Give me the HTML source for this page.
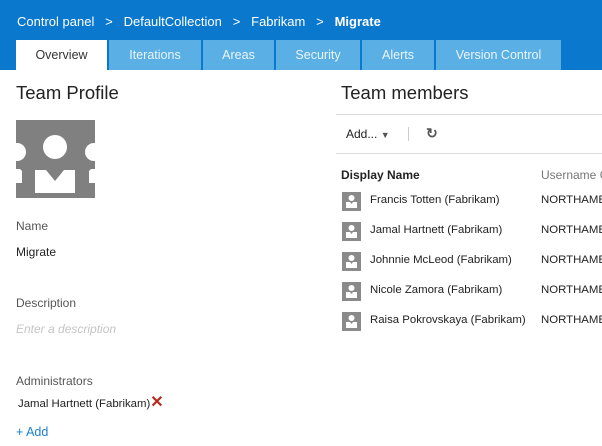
<!DOCTYPE html>
<html><head><style>
body{margin:0;width:602px;height:446px;overflow:hidden;background:#fff;font-family:"Liberation Sans",sans-serif;position:relative}
.a{position:absolute;white-space:nowrap}
.hdr{position:absolute;left:0;top:0;width:602px;height:70px;background:#0a78cd}
.tab{position:absolute;top:40px;height:30px;background:#5aafe5;color:#eaf5fc;font-size:12.5px;text-align:center;line-height:31px}
.lbl{color:#555;font-size:12px}
.txt{color:#222;font-size:12px}
.r{color:#222;font-size:11.4px}
.av{position:absolute;left:342px;width:19px;height:19px;background:#8a8a8a;overflow:hidden}
</style></head><body>
<div class="hdr"></div>
<div class="a" style="left:17px;top:14px;color:#fff;font-size:13px">Control panel &nbsp;&nbsp;&gt;&nbsp;&nbsp; DefaultCollection &nbsp;&nbsp;&gt;&nbsp;&nbsp; Fabrikam &nbsp;&nbsp;&gt;&nbsp;&nbsp; <b>Migrate</b></div>
<div class="tab" style="left:16px;width:91px;background:#fff;color:#333">Overview</div>
<div class="tab" style="left:109px;width:92px">Iterations</div>
<div class="tab" style="left:203px;width:71px">Areas</div>
<div class="tab" style="left:276px;width:84px">Security</div>
<div class="tab" style="left:362px;width:72px">Alerts</div>
<div class="tab" style="left:436px;width:125px">Version Control</div>

<div class="a" style="left:16px;top:82px;font-size:18.5px;color:#222">Team Profile</div>
<svg class="a" style="left:16px;top:120px" width="79" height="78" viewBox="0 0 79 78">
<rect width="79" height="78" fill="#808080"/>
<circle cx="39" cy="27" r="12" fill="#fff"/>
<circle cx="1" cy="32" r="9" fill="#fff"/>
<circle cx="78" cy="32" r="9" fill="#fff"/>
<path d="M19 50 H30 L39 61 L48 50 H59 V73 H19 Z" fill="#fff"/>
<path d="M0 49 H4 L6 51 V63 H0 Z M79 49 H75 L73 51 V63 H79Z" fill="#fff"/>
</svg>
<div class="a lbl" style="left:16px;top:219px">Name</div>
<div class="a txt" style="left:16px;top:245px">Migrate</div>
<div class="a lbl" style="left:16px;top:296px">Description</div>
<div class="a" style="left:16px;top:322px;font-size:12px;color:#c4c4c4;font-style:italic">Enter a description</div>
<div class="a lbl" style="left:16px;top:374px">Administrators</div>
<div class="a txt" style="left:18px;top:398px;font-size:11.4px">Jamal Hartnett (Fabrikam)<span style="color:#b52a1a;font-size:16px;font-weight:bold;line-height:10px">✕</span></div>
<div class="a" style="left:16px;top:425px;font-size:12.5px;color:#1a7fd0">+ Add</div>

<div class="a" style="left:341px;top:82px;font-size:18.5px;color:#222">Team members</div>
<div class="a" style="left:336px;top:114px;width:266px;height:1px;background:#ddd"></div>
<div class="a txt" style="left:346px;top:127px">Add... <span style="font-size:9px;color:#555">▼</span></div>
<div class="a" style="left:408px;top:127px;width:1px;height:14px;background:#ccc"></div>
<div class="a" style="left:426px;top:125px;font-size:14px;color:#555;font-weight:bold">↻</div>
<div class="a" style="left:336px;top:153px;width:266px;height:1px;background:#ddd"></div>
<div class="a" style="left:341px;top:168px;font-size:12px;font-weight:bold;color:#222">Display Name</div>
<div class="a lbl" style="left:541px;top:168px;color:#777">Username Or</div>

<div class="av" style="top:192px"><svg width="19" height="19"><circle cx="9.5" cy="6" r="3" fill="#fff"/><path d="M4 10H8L9.5 12L11 10H15V16H4Z" fill="#fff"/></svg></div><div class="a r" style="left:370px;top:194px">Francis Totten (Fabrikam)</div><div class="a r" style="left:541px;top:194px">NORTHAMERICA</div>
<div class="av" style="top:222px"><svg width="19" height="19"><circle cx="9.5" cy="6" r="3" fill="#fff"/><path d="M4 10H8L9.5 12L11 10H15V16H4Z" fill="#fff"/></svg></div><div class="a r" style="left:370px;top:224px">Jamal Hartnett (Fabrikam)</div><div class="a r" style="left:541px;top:224px">NORTHAMERICA</div>
<div class="av" style="top:252px"><svg width="19" height="19"><circle cx="9.5" cy="6" r="3" fill="#fff"/><path d="M4 10H8L9.5 12L11 10H15V16H4Z" fill="#fff"/></svg></div><div class="a r" style="left:370px;top:254px">Johnnie McLeod (Fabrikam)</div><div class="a r" style="left:541px;top:254px">NORTHAMERICA</div>
<div class="av" style="top:282px"><svg width="19" height="19"><circle cx="9.5" cy="6" r="3" fill="#fff"/><path d="M4 10H8L9.5 12L11 10H15V16H4Z" fill="#fff"/></svg></div><div class="a r" style="left:370px;top:284px">Nicole Zamora (Fabrikam)</div><div class="a r" style="left:541px;top:284px">NORTHAMERICA</div>
<div class="av" style="top:312px"><svg width="19" height="19"><circle cx="9.5" cy="6" r="3" fill="#fff"/><path d="M4 10H8L9.5 12L11 10H15V16H4Z" fill="#fff"/></svg></div><div class="a r" style="left:370px;top:314px">Raisa Pokrovskaya (Fabrikam)</div><div class="a r" style="left:541px;top:314px">NORTHAMERICA</div>
</body></html>
